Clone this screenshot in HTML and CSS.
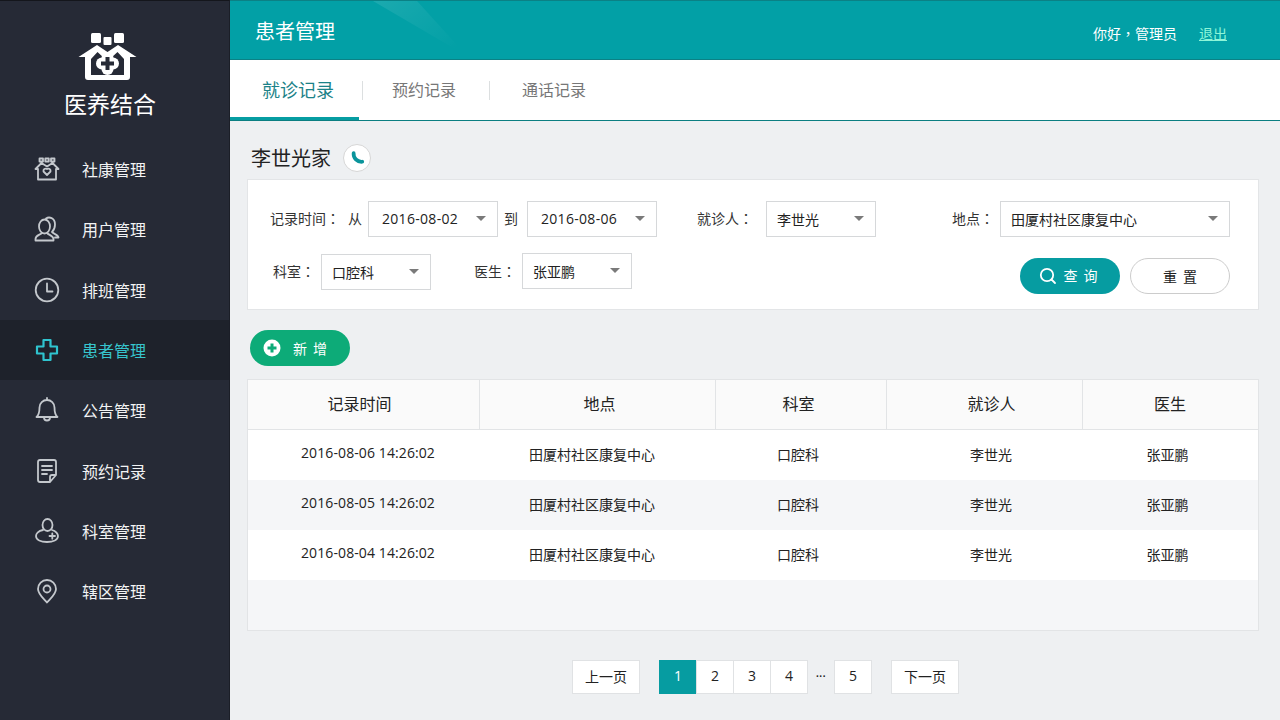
FILE: index.html
```html
<!DOCTYPE html>
<html>
<head>
<meta charset="utf-8">
<title>患者管理</title>
<link rel="stylesheet" href="styles.css">
</head>
<body>
<div class="app">
  <aside class="sidebar">
    <div class="brand">
      <svg class="brand-mark" viewBox="0 0 60 50" width="60" height="50">
        <rect class="w" x="13" y="1" width="10" height="10" rx="1.5"/>
        <rect class="w" x="25.5" y="5" width="8" height="8" rx="1"/>
        <rect class="w" x="36" y="1" width="10" height="10" rx="1.5"/>
        <path class="w" d="M.5 25 19 13 29.5 20 40 13 58.500 25H52V45Q52 48 49 48H10Q7 48 7 45V25Z"/>
        <path class="d" d="M13 43V27L19.5 20 26 26H33L39.5 20 46 27V43Z"/>
        <circle class="w" cx="29.5" cy="26" r="6"/><circle class="w" cx="29.5" cy="37" r="6"/>
        <circle class="w" cx="24" cy="31.5" r="6"/><circle class="w" cx="35" cy="31.5" r="6"/>
        <path class="d" d="M27.5 25h4v4.500H36v4h-4.500v4.500h-4v-4.500H23v-4h4.500Z"/>
      </svg>
      <div class="brand-name">医养结合</div>
    </div>
    <nav class="menu">
      <a class="menu-item row-up"><svg class="ico" viewBox="0 0 26 26"><path d="M5.500 2.500h3.500v3h-3.500zM11.300 2.500h3.500v3h-3.500zM17 2.500h3.500v3H17zM1.500 13 7.500 7 13 10.500 18.500 7 24.500 13H22V23.500H4V13ZM13 19l-3.500-3.500a2.300 2.300 0 0 1 3.500-2.500 2.300 2.300 0 0 1 3.500 2.500Z"/></svg><span>社康管理</span></a>
      <a class="menu-item row-up"><svg class="ico" viewBox="0 0 26 26"><ellipse cx="10.500" cy="10.500" rx="5.500" ry="7"/><path d="M8 17C6 19 1.500 19 1.500 23V24.500H19.500V23C19.500 20 15 19 13 17M12 2.500C15 .5 21 1.500 21 8.500 21 12 19.500 14.500 18 16 19 18 24 18 24.500 21.500H21"/></svg><span>用户管理</span></a>
      <a class="menu-item"><svg class="ico" viewBox="0 0 26 26"><circle cx="13" cy="13" r="11.300"/><path d="M13 6.500V14.500H18.500"/></svg><span>排班管理</span></a>
      <a class="menu-item is-active"><svg class="ico" viewBox="0 0 26 26"><path d="M9.500 3H16.500V9.500H23V16.500H16.500V23H9.500V16.500H3V9.500H9.500Z"/></svg><span>患者管理</span></a>
      <a class="menu-item"><svg class="ico" viewBox="0 0 26 26"><path d="M2.500 20C5.500 17.500 5.500 13 5.500 10.500 5.500 6 9 3 13 3S20.500 6 20.500 10.500C20.500 13 20.500 17.500 23.500 20ZM10 20.500A3 3 0 0 0 16 20.500M13 1V3"/></svg><span>公告管理</span></a>
      <a class="menu-item row-down"><svg class="ico" viewBox="0 0 26 26"><path d="M6 2H20Q22 2 22 4V17L16 24H6Q4 24 4 22V4Q4 2 6 2ZM8 8H18M8 12H18M8 16H13M22 17H18Q16 17 16 19V24"/></svg><span>预约记录</span></a>
      <a class="menu-item row-down"><svg class="ico" viewBox="0 0 26 26"><ellipse cx="13.500" cy="7" rx="5" ry="6"/><path d="M9 12C4 13 2 16 2 18 2 22 7 24 13 24S24 22 24 18C24 16 22 13 18 12M15.500 18H21M18.300 15.300V20.700"/></svg><span>科室管理</span></a>
      <a class="menu-item row-down"><svg class="ico" viewBox="0 0 26 26"><path d="M13 24.500C9 20 4 16 4 11A9 9 0 0 1 22 11C22 16 17 20 13 24.500Z"/><circle cx="13" cy="11" r="3.500"/></svg><span>辖区管理</span></a>
    </nav>
  </aside>

  <div class="main">
    <header class="topbar">
      <svg class="gloss" viewBox="0 0 120 60" width="120" height="60"><defs><linearGradient id="gl" x1="0" y1="0" x2="1" y2="0.700"><stop offset="0" stop-color="#fff" stop-opacity=".1"/><stop offset="1" stop-color="#fff" stop-opacity="0"/></linearGradient></defs><path fill="url(#gl)" d="M18 0 112 55 62 0Z"/></svg>
      <h1 class="page-title">患者管理</h1>
      <div class="user">
        <span class="hello">你好，管理员</span>
        <a class="logout">退出</a>
      </div>
    </header>

    <div class="tabs">
      <a class="tab is-current">就诊记录</a>
      <i class="tab-sep sep-a"></i>
      <a class="tab tab-b">预约记录</a>
      <i class="tab-sep sep-b"></i>
      <a class="tab tab-c">通话记录</a>
    </div>

    <section class="content">
      <div class="family">
        <h2 class="family-name">李世光家</h2>
        <span class="call"><svg viewBox="0 0 24 24" width="18" height="18"><path d="M7.500 5.500C7 12 12 17.500 19 17"/></svg></span>
      </div>

      <div class="filter">
        <div class="filter-row">
          <label class="lbl first">记录时间：</label>
          <span class="lbl from">从</span>
          <div class="select date w130">2016-08-02</div>
          <span class="lbl to">到</span>
          <div class="select date w130">2016-08-06</div>
          <label class="lbl ml40 gap13">就诊人：</label>
          <div class="select w110">李世光</div>
          <label class="lbl ml76">地点：</label>
          <div class="select w230">田厦村社区康复中心</div>
        </div>
        <div class="filter-row second">
          <label class="lbl ml2">科室：</label>
          <div class="select w110">口腔科</div>
          <label class="lbl ml43">医生：</label>
          <div class="select w110 up1">张亚鹏</div>
          <div class="actions">
            <button class="btn btn-search"><svg viewBox="0 0 18 18" width="18" height="18"><circle cx="8" cy="8" r="6.200"/><path d="M12.500 12.500 16 16"/></svg><span>查询</span></button>
            <button class="btn btn-reset">重置</button>
          </div>
        </div>
      </div>

      <button class="btn-add"><svg viewBox="0 0 18 18" width="18" height="18"><circle class="add-c" cx="9" cy="9" r="8.500"/><path class="add-p" d="M9 4.500V13.500M4.500 9H13.500"/></svg><span>新增</span></button>

      <div class="table">
        <div class="thead">
          <div class="th th1">记录时间</div>
          <div class="th th2">地点</div>
          <div class="th th3">科室</div>
          <div class="th th4">就诊人</div>
          <div class="th th5">医生</div>
        </div>
        <div class="tr"><div class="time">2016-08-06 14:26:02</div><div>田厦村社区康复中心</div><div>口腔科</div><div>李世光</div><div>张亚鹏</div></div>
        <div class="tr alt"><div class="time">2016-08-05 14:26:02</div><div>田厦村社区康复中心</div><div>口腔科</div><div>李世光</div><div>张亚鹏</div></div>
        <div class="tr"><div class="time">2016-08-04 14:26:02</div><div>田厦村社区康复中心</div><div>口腔科</div><div>李世光</div><div>张亚鹏</div></div>
        <div class="tr alt"></div>
      </div>

      <div class="pager">
        <a class="pg pg-text">上一页</a>
        <div class="pg-nums">
          <a class="pg pg-num is-on">1</a>
          <a class="pg pg-num joined">2</a>
          <a class="pg pg-num joined">3</a>
          <a class="pg pg-num joined">4</a>
          <span class="pg-dots">···</span>
          <a class="pg pg-num">5</a>
        </div>
        <a class="pg pg-text">下一页</a>
      </div>
    </section>
  </div>
</div>
</body>
</html>
```

FILE: styles.css
```css
* { box-sizing: border-box; }
html, body { margin: 0; height: 100%; }
body {
  width: 1280px;
  height: 720px;
  overflow: hidden;
  font-family: "Open Sans", "Noto Sans CJK SC", sans-serif;
  font-size: 14px;
  color: #222;
  background: #eef0f2;
}
.app { display: flex; height: 720px; }

/* sidebar */
.sidebar {
  width: 230px;
  flex: none;
  background: #262a36;
  border-right: 1px solid #1b1e27;
  border-top: 1px solid #14161c;
}
.brand {
  height: 139px;
  padding-top: 31px;
  display: flex;
  flex-direction: column;
  align-items: flex-start;
}
.brand-mark { display: block; margin-left: 78px; }
.brand-mark .w { fill: #fff; }
.brand-mark .d { fill: #262a36; }
.brand-name {
  margin: 6px 0 0 64px;
  font-size: 23px;
  line-height: 30px;
  color: #fff;
  font-family: "Noto Sans CJK SC", sans-serif;
}
.menu-item {
  height: 60px;
  padding-left: 34px;
  display: flex;
  align-items: center;
  gap: 22px;
  font-size: 16px;
  color: #f2f3f4;
  font-family: "Noto Sans CJK SC", sans-serif;
}
.row-up { padding-bottom: 2px; }
.row-down { padding-top: 2px; }
.ico {
  width: 26px;
  height: 26px;
  fill: none;
  stroke: #c4c8cd;
  stroke-width: 1.800;
  stroke-linejoin: round;
  stroke-linecap: round;
}
.is-active { background: #1e222b; color: #37c5ce; }
.is-active .ico { stroke: #2fc4cf; stroke-width: 2.200; }

/* top */
.main { flex: 1; min-width: 0; display: flex; flex-direction: column; }
.topbar {
  position: relative;
  height: 60px;
  flex: none;
  padding: 0 53px 0 25px;
  display: flex;
  align-items: center;
  justify-content: space-between;
  background: #02a0a6;
  border-top: 1px solid #0b8185;
  border-bottom: 1px solid #0b8185;
  color: #fff;
}
.gloss { position: absolute; left: 125px; top: 0; }
.page-title {
  margin: 0;
  font-size: 20px;
  font-weight: 400;
  font-family: "Noto Sans CJK SC", sans-serif;
}
.user { display: flex; gap: 22px; font-size: 14px; margin-top: 5px; }
.hello { font-family: "Noto Sans CJK TC", sans-serif; }
.logout { color: #8df5d8; text-decoration: underline; font-family: "Noto Sans CJK SC", sans-serif; }

.tabs {
  height: 61px;
  flex: none;
  display: flex;
  align-items: center;
  background: #fff;
  border-bottom: 1px solid #0b7f82;
  font-family: "Noto Sans CJK SC", sans-serif;
}
.tab { font-size: 16px; color: #777; padding-bottom: 2px; }
.tab.is-current {
  width: 129px;
  height: 60px;
  line-height: 58px;
  padding: 0 0 0 32px;
  font-size: 18px;
  color: #1b8288;
  box-shadow: inset 0 -3px 0 #069da2;
}
.tab-sep { width: 1px; height: 19px; background: #dcdfe0; }
.sep-a { margin-left: 3px; }
.tab-b { margin-left: 29px; }
.sep-b { margin-left: 33px; }
.tab-c { margin-left: 32px; }

/* content */
.content { padding: 23px 21px 0 17px; }
.family { display: flex; align-items: center; height: 28px; padding-left: 4px; gap: 12px; }
.family-name {
  margin: -2px 0 0;
  font-size: 20px;
  font-weight: 400;
  color: #222;
  font-family: "Noto Sans CJK SC", sans-serif;
}
.call {
  width: 28px;
  height: 28px;
  border: 1px solid #d6d6d6;
  border-radius: 50%;
  background: #fff;
  display: flex;
  align-items: center;
  justify-content: center;
}
.call svg { fill: none; stroke: #0a949b; stroke-width: 5; stroke-linecap: round; }

.filter {
  margin-top: 7px;
  height: 131px;
  padding: 21px 28px 0 23px;
  background: #fff;
  border: 1px solid #e3e5e7;
}
.filter-row { display: flex; align-items: flex-start; height: 36px; }
.filter-row.second { margin-top: 17px; }
.lbl {
  flex: none;
  margin-right: 6px;
  line-height: 36px;
  margin-top: -1px;
  color: #333;
  font-family: "Noto Sans CJK TC", sans-serif;
}
.first { margin-left: -1px; }
.from { margin-left: 2px; }
.to { margin-left: 6px; margin-right: 9px; }
.ml40 { margin-left: 40px; }
.gap13 { margin-right: 13px; }
.ml76 { margin-left: 76px; }
.ml2 { margin-left: 2px; }
.ml43 { margin-left: 43px; }
.select {
  position: relative;
  flex: none;
  height: 36px;
  line-height: 34px;
  padding-left: 10px;
  background: #fff;
  border: 1px solid #d6d8da;
  color: #222;
  font-family: "Noto Sans CJK SC", sans-serif;
}
.select::after {
  content: "";
  position: absolute;
  right: 11px;
  top: 14px;
  border: 5px solid transparent;
  border-top: 5px solid #7a7a7a;
  border-bottom: 0;
}
.date { padding-left: 13px; font-family: "Open Sans", sans-serif; letter-spacing: .3px; }
.w130 { width: 130px; }
.w110 { width: 110px; }
.w230 { width: 230px; }
.up1 { margin-top: -1px; }
.actions { margin-left: auto; margin-top: 4px; display: flex; gap: 10px; }
.btn {
  width: 100px;
  height: 36px;
  border-radius: 18px;
  padding: 0;
  display: flex;
  align-items: center;
  justify-content: center;
  font: 14px "Noto Sans CJK SC", sans-serif;
  letter-spacing: 6px;
  text-indent: 6px;
}
.btn-search { gap: 1px; padding-left: 2px; background: #069ca1; border: 0; color: #fff; }
.btn-search span { margin-top: -2px; }
.btn-search svg { fill: none; stroke: #fff; stroke-width: 1.800; stroke-linecap: round; }
.btn-reset { background: #fff; border: 1px solid #ccc; color: #222; }

.btn-add {
  margin: 20px 0 0 3px;
  width: 100px;
  height: 36px;
  padding: 0 0 0 13px;
  border: 0;
  border-radius: 18px;
  background: #0dab78;
  color: #fff;
  display: flex;
  align-items: center;
  gap: 12px;
  font: 14px "Noto Sans CJK SC", sans-serif;
  letter-spacing: 6px;
}
.add-c { fill: #fff; }
.add-p { stroke: #0dab78; stroke-width: 3; fill: none; }

.table {
  margin-top: 13px;
  height: 252px;
  border: 1px solid #e2e4e6;
  background: #f5f6f8;
  font-family: "Noto Sans CJK SC", sans-serif;
}
.thead {
  display: grid;
  grid-template-columns: 232px 236px 171px 196px 1fr;
  height: 50px;
  background: #fafafa;
  border-bottom: 1px solid #e2e4e6;
}
.th {
  line-height: 47px;
  text-align: center;
  font-size: 16px;
  color: #222;
  border-right: 1px solid #e2e4e6;
}
.th1 { padding-right: 8px; }
.th2 { padding-left: 4px; }
.th3 { padding-right: 5px; }
.th4 { padding-left: 14px; }
.th5 { padding-right: 1px; border-right: 0; }
.tr {
  display: grid;
  grid-template-columns: 240px 208px 204px 182px 171px 1fr;
  height: 50px;
  background: #fff;
  text-align: center;
  line-height: 49px;
  color: #222;
}
.tr.alt { background: #f5f6f8; }
.time { font-family: "Open Sans", sans-serif; letter-spacing: .1px; line-height: 45px; }

.pager { margin-top: 29px; padding-left: 325px; display: flex; gap: 19px; font-family: "Noto Sans CJK SC", sans-serif; }
.pg-nums { display: flex; }
.pg {
  height: 34px;
  line-height: 30px;
  text-align: center;
  background: #fff;
  border: 1px solid #e0e2e4;
  color: #222;
}
.pg-text { width: 68px; }
.pg-num { width: 38px; font-family: "Open Sans", sans-serif; }
.joined { margin-left: -1px; }
.is-on { background: #069ca1; border-color: #069ca1; color: #fff; }
.pg-dots { width: 26px; text-align: center; font: bold 10px/34px "Liberation Sans", sans-serif; }
```
